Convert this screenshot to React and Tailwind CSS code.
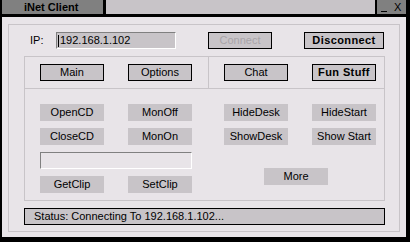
const font = { fontFamily: '"Liberation Sans", Arial, sans-serif' };

function Btn({ children, className = "", color = "text-black" }) {
  return (
    <div
      className={
        "h-[17px] flex items-center justify-center bg-[#c8c4c8] text-[11px] leading-none " +
        color +
        " " +
        className
      }
    >
      {children}
    </div>
  );
}

export default function App() {
  return (
    <div
      className="w-[410px] h-[242px] bg-black flex flex-col pl-[2px] pr-[4px] pb-[5px]"
      style={font}
    >
      {/* title bar */}
      <div className="h-[14px] flex">
        <div className="w-[101px] bg-[#808080] flex items-center pl-[22px] text-[11px] font-bold leading-none text-black">
          iNet Client
        </div>
        <div className="ml-[3px] flex-1 bg-[#c8c4c8]" />
        <div className="ml-[2px] w-[29px] bg-[#808080] relative text-[11px] leading-none text-black">
          <div className="absolute left-[4px] top-[11px] w-[6px] h-px bg-black" />
          <div className="absolute left-[17px] top-[2px]">X</div>
        </div>
      </div>
      <div className="h-[3px]" />

      {/* body */}
      <div className="flex-1 bg-[#e8e4e8] pt-[7px] px-[6px] pb-[5px]">
        <div className="h-full border border-[#c8c4c8] flex flex-col">
          {/* IP row */}
          <div className="mt-[7px] flex items-center pl-[21px] h-[17px]">
            <div className="w-[26px] text-[11px] leading-none text-black">IP:</div>
            <div className="w-[120px] h-[17px] bg-[#c8c4c8] border-t border-l border-[#808080] border-b-white border-r-white border-b border-r flex items-center text-[11px] leading-none text-black">
              <span className="w-px h-[12px] bg-black ml-[1px] mr-[1px]" />
              192.168.1.102
            </div>
            <Btn className="ml-[32px] w-[64px] border border-black" color="text-[#a8a4a8]">
              Connect
            </Btn>
            <Btn className="ml-[32px] w-[80px] border border-black font-bold tracking-[0.4px]">
              Disconnect
            </Btn>
          </div>

          {/* tab panel */}
          <div className="mt-[7px] ml-[15px] w-[361px] h-[145px] border border-[#c8c4c8] flex flex-col">
            <div className="h-[32px] border-b border-[#c8c4c8] flex">
              <div className="w-[184px] border-r border-[#c8c4c8] flex pt-[7px] pl-[15px] gap-[24px]">
                <Btn className="w-[64px] border border-black">Main</Btn>
                <Btn className="w-[64px] border border-black">Options</Btn>
              </div>
              <div className="flex pt-[7px] pl-[15px] gap-[24px]">
                <Btn className="w-[64px] border border-black">Chat</Btn>
                <Btn className="w-[64px] border border-black font-bold tracking-[0.4px]">
                  Fun Stuff
                </Btn>
              </div>
            </div>

            <div className="flex pt-[15px] pl-[15px]">
              <div className="w-[152px] flex flex-col gap-[7px]">
                <div className="flex gap-[24px]">
                  <Btn className="w-[64px]">OpenCD</Btn>
                  <Btn className="w-[64px]">MonOff</Btn>
                </div>
                <div className="flex gap-[24px]">
                  <Btn className="w-[64px]">CloseCD</Btn>
                  <Btn className="w-[64px]">MonOn</Btn>
                </div>
                <div className="w-[152px] h-[17px] border-t border-l border-[#808080] border-b border-r border-b-white border-r-white" />
                <div className="flex gap-[24px]">
                  <Btn className="w-[64px]">GetClip</Btn>
                  <Btn className="w-[64px]">SetClip</Btn>
                </div>
              </div>
              <div className="ml-[32px] flex flex-col gap-[7px]">
                <div className="flex gap-[24px]">
                  <Btn className="w-[64px]">HideDesk</Btn>
                  <Btn className="w-[64px]">HideStart</Btn>
                </div>
                <div className="flex gap-[24px]">
                  <Btn className="w-[64px]">ShowDesk</Btn>
                  <Btn className="w-[64px]">Show Start</Btn>
                </div>
                <Btn className="mt-[16px] ml-[40px] w-[64px]">More</Btn>
              </div>
            </div>
          </div>

          {/* status */}
          <div className="mt-[7px] ml-[15px] w-[361px] h-[17px] bg-[#c8c4c8] border border-black flex items-center pl-[9px] text-[11px] leading-none text-black">
            Status: Connecting To 192.168.1.102...
          </div>
        </div>
      </div>
    </div>
  );
}
